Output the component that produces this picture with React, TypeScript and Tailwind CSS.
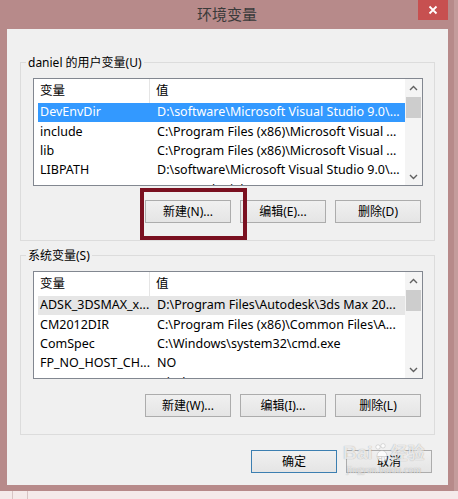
const font = "font-['Noto_Sans','Noto_Sans_CJK_SC',sans-serif]";

const userVars: [string, string][] = [
  ["DevEnvDir", "D:\\software\\Microsoft Visual Studio 9.0\\..."],
  ["include", "C:\\Program Files (x86)\\Microsoft Visual ..."],
  ["lib", "C:\\Program Files (x86)\\Microsoft Visual ..."],
  ["LIBPATH", "D:\\software\\Microsoft Visual Studio 9.0\\..."],
  ["source", "c:\\users\\daniel\\source\\..."],
];

const sysVars: [string, string][] = [
  ["ADSK_3DSMAX_x...", "D:\\Program Files\\Autodesk\\3ds Max 20..."],
  ["CM2012DIR", "C:\\Program Files (x86)\\Common Files\\A..."],
  ["ComSpec", "C:\\Windows\\system32\\cmd.exe"],
  ["FP_NO_HOST_CH...", "NO"],
  ["os", "windows_nt"],
];

function Chevron({ up }: { up?: boolean }) {
  return (
    <svg width="9" height="6" viewBox="0 0 9 6">
      <path
        d={up ? "M1 5 L4.5 1.5 L8 5" : "M1 1 L4.5 4.5 L8 1"}
        fill="none"
        stroke="#606060"
        strokeWidth="1.4"
      />
    </svg>
  );
}

function VarList({ rows, selected }: { rows: [string, string][]; selected: "active" | "inactive" }) {
  return (
    <div className="ml-[12px] flex h-[108px] w-[390px] overflow-hidden border border-[#828790] bg-white text-[12.5px] text-black">
      <div className="flex-1 overflow-hidden">
        <div className="flex h-[24px] items-center">
          <div className="flex h-full w-[116px] items-center border-r border-[#e5e5e5] pl-[6px]">变量</div>
          <div className="pl-[6px]">值</div>
        </div>
        {rows.map(([name, value], i) => {
          const sel =
            i === 0
              ? selected === "active"
                ? "bg-[#3399ff] text-white"
                : "bg-[#e6e6e6]"
              : "";
          return (
            <div key={name + i} className={`ml-[4px] flex h-[19.4px] items-center whitespace-nowrap ${sel}`}>
              <div className="w-[117px] pl-[2px]">{name}</div>
              <div className="pl-[2px]">{value}</div>
            </div>
          );
        })}
      </div>
      <div className="flex w-[17px] flex-col bg-[#f4f4f4]">
        <div className="flex h-[17px] items-center justify-center">
          <Chevron up />
        </div>
        <div className="mx-[1px] mt-[1px] h-[21px] bg-[#cdcdcd]" />
        <div className="flex-1" />
        <div className="flex h-[17px] items-center justify-center">
          <Chevron />
        </div>
      </div>
    </div>
  );
}

function Btn({ label, primary }: { label: string; primary?: boolean }) {
  return (
    <div
      className={`flex h-[23px] w-[86px] items-center justify-center border bg-gradient-to-b from-[#f0f0f0] to-[#e5e5e5] text-[12px] text-black ${
        primary ? "border-[#3c7fb1]" : "border-[#acacac]"
      }`}
    >
      {label}
    </div>
  );
}

function ButtonRow({ labels }: { labels: string[] }) {
  return (
    <div className="flex justify-end gap-[9px] pr-[13px]">
      {labels.map((l) => (
        <Btn key={l} label={l} />
      ))}
    </div>
  );
}

export default function App() {
  return (
    <div className={`relative flex h-[499px] w-[458px] flex-col bg-[#b78a8a] ${font}`}>
      <div className="flex h-[491px]">
        <div className="flex w-[454px] flex-col">
          {/* title bar */}
          <div className="grid h-[29px] grid-cols-[1fr_auto_1fr]">
            <div />
            <div className="flex items-center text-[15px] text-[#3a3a3a]">环境变量</div>
            <div className="flex justify-end pr-[6px]">
              <div className="flex h-[20px] w-[30px] items-center justify-center bg-[#c75050]">
                <svg width="10" height="10" viewBox="0 0 10 10">
                  <path d="M1.5 1.5 L8.5 8.5 M8.5 1.5 L1.5 8.5" stroke="white" strokeWidth="1.8" />
                </svg>
              </div>
            </div>
          </div>

          {/* client area */}
          <div className="ml-[7px] flex h-[456px] w-[441px] flex-col bg-[#f0f0f0] px-[13px] text-[12px] text-black">
            <fieldset className="mt-[25px] border border-[#dcdcdc]">
              <legend className="ml-[5px] px-[2px] leading-[17px]">daniel 的用户变量(U)</legend>
              <div className="mt-[7px]">
                <VarList rows={userVars} selected="active" />
              </div>
              <div className="mb-[17px] mt-[14px]">
                <ButtonRow labels={["新建(N)...", "编辑(E)...", "删除(D)"]} />
              </div>
            </fieldset>

            <fieldset className="mt-[6px] border border-[#dcdcdc]">
              <legend className="ml-[5px] px-[2px] leading-[17px]">系统变量(S)</legend>
              <div className="mt-[7px]">
                <VarList rows={sysVars} selected="inactive" />
              </div>
              <div className="mb-[17px] mt-[15px]">
                <ButtonRow labels={["新建(W)...", "编辑(I)...", "删除(L)"]} />
              </div>
            </fieldset>

            <div className="mr-[3px] mt-[15px] flex justify-end gap-[9px]">
              <Btn label="确定" primary />
              <Btn label="取消" />
            </div>
          </div>
        </div>
        <div className="flex-1 bg-[#c49c9c]" />
      </div>

      {/* desktop strip below the window */}
      <div className="flex flex-1 bg-[#f5eaea]">
        <div className="w-[13px] border-r border-[#d8c4c4]" />
        <div className="w-[15px] border-r border-[#d8c4c4]" />
      </div>

      {/* annotation box */}
      <div className="absolute left-[140px] top-[188px] h-[52px] w-[107px] border-[4px] border-[#7a1020]" />

      {/* watermark */}
      <div className="pointer-events-none absolute left-[343px] top-[442px] flex flex-col items-center text-white/75 [text-shadow:0_0_1px_rgba(0,0,0,0.35)]">
        <div className="flex items-center text-[19px] font-bold leading-[22px]">
          <span className="font-['Liberation_Sans',sans-serif]">Bai</span>
          <svg width="16" height="20" viewBox="0 0 16 20" className="mx-[1px]">
            <g fill="rgba(255,255,255,0.8)" stroke="rgba(120,120,120,0.4)" strokeWidth="0.6">
              <circle cx="4" cy="4" r="2.2" />
              <circle cx="9" cy="2.8" r="2.2" />
              <ellipse cx="8" cy="13" rx="5" ry="5.5" />
            </g>
          </svg>
          <span className="text-[17px]">经验</span>
        </div>
        <div className="font-['Liberation_Serif',serif] text-[10px] leading-[12px] text-white/70">jingyan.baidu.com</div>
      </div>
    </div>
  );
}
